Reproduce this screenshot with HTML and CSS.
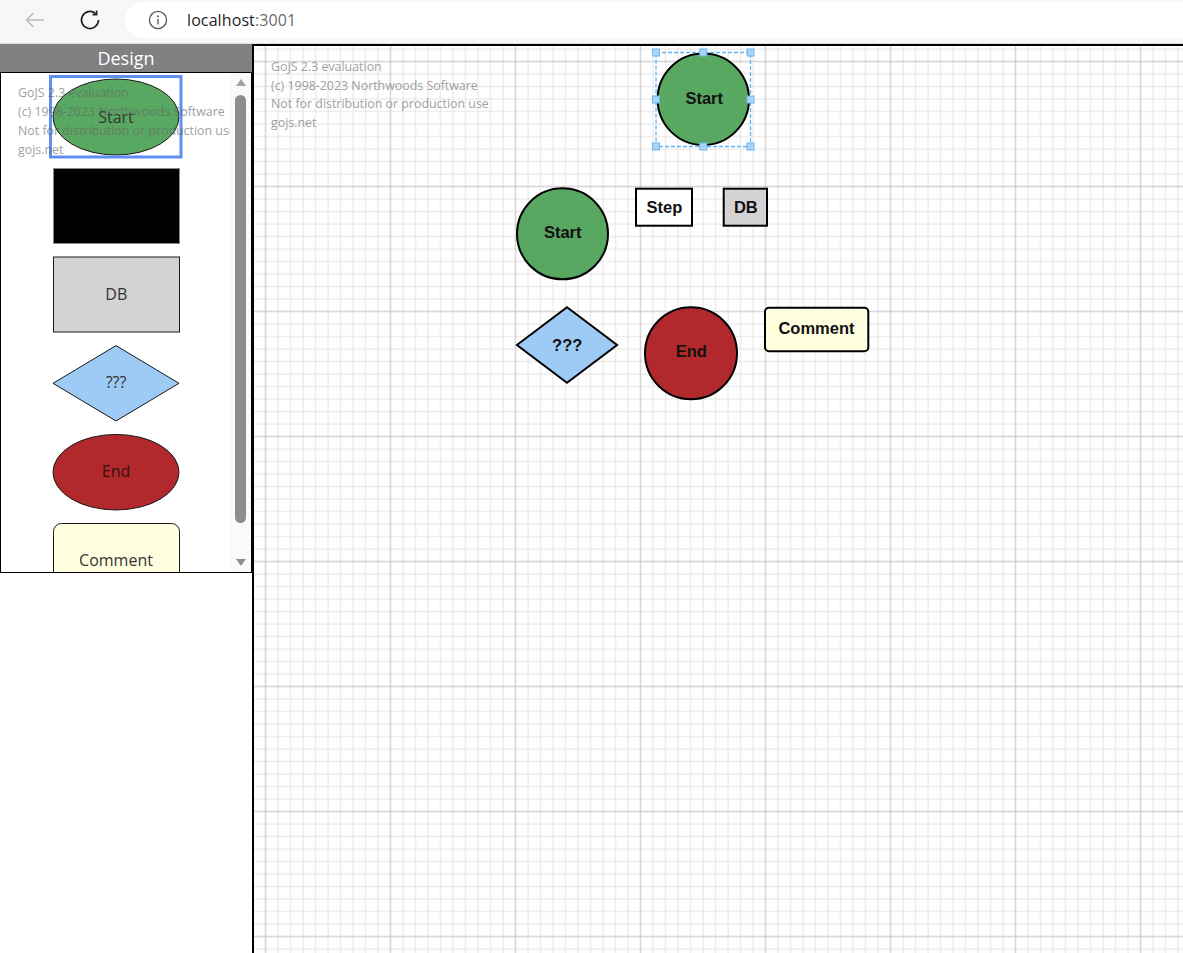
FILE: index.html
```html
<!DOCTYPE html>
<html lang="en">
<head>
<meta charset="utf-8">
<title>localhost:3001</title>
<link rel="stylesheet" href="styles.css">
</head>
<body>
<header class="browser-bar">
  <button class="nav-btn nav-back" aria-label="Back">
    <svg class="nav-icon" viewBox="0 0 22 22"><path class="icon-back" d="M20 11H2.5M9.5 4L2.5 11L9.5 18"/></svg>
  </button>
  <button class="nav-btn nav-reload" aria-label="Reload">
    <svg class="nav-icon" viewBox="0 0 22 22"><path class="icon-reload" d="M19.5 11A8.5 8.5 0 1 1 16.6 4.6"/><path class="icon-reload" d="M17.6 1.5V5.6H13.5"/></svg>
  </button>
  <div class="omnibox">
    <svg class="info-icon" viewBox="0 0 20 20"><circle class="icon-info" cx="10" cy="10" r="8.6"/><circle class="icon-info-dot" cx="10" cy="6.2" r="1"/><path class="icon-info" d="M10 8.7V14.6"/></svg>
    <span class="url"><span class="host">localhost</span><span class="port">:3001</span></span>
  </div>
</header>
<main class="app">
  <aside class="palette-col">
    <div class="palette-title">Design</div>
    <div class="palette">
      <svg class="palette-canvas" viewBox="0 0 229 499">
        <ellipse class="fill-green stroke-thin" cx="115" cy="44" rx="63" ry="38"/>
        <text class="pal-label" x="115" y="49.7">Start</text>
        <rect class="fill-black stroke-soft" x="52.5" y="95.5" width="126" height="75"/>
        <rect class="fill-gray stroke-thin" x="52.5" y="184" width="126" height="75"/>
        <text class="pal-label" x="115.3" y="227">DB</text>
        <polygon class="fill-blue stroke-thin" points="52,310.3 115,272.6 178,310.3 115,348"/>
        <text class="pal-label" x="115" y="315.3">???</text>
        <ellipse class="fill-red stroke-thin" cx="115" cy="399.2" rx="63" ry="37.8"/>
        <text class="pal-label pal-label-dark" x="115" y="404.3">End</text>
        <rect class="fill-yellow stroke-thin" x="52.5" y="450.5" width="126" height="76" rx="8"/>
        <text class="pal-label" x="115" y="493">Comment</text>
        <rect class="pal-selection" x="49.5" y="3.5" width="130.5" height="80.5"/>
        <g class="watermark">
          <text x="17" y="23.7">GoJS 2.3 evaluation</text>
          <text x="17" y="42.7">(c) 1998-2023 Northwoods Software</text>
          <text x="17" y="61.7">Not for distribution or production use</text>
          <text x="17" y="80.7">gojs.net</text>
        </g>
      </svg>
      <div class="scrollbar">
        <span class="scroll-up"></span>
        <span class="scroll-thumb"></span>
        <span class="scroll-down"></span>
      </div>
    </div>
  </aside>
  <section class="diagram">
    <svg class="diagram-canvas" viewBox="0 0 958 918">
      <defs>
        <pattern id="grid" width="125" height="125" patternUnits="userSpaceOnUse" x="-57.25" y="-53.25">
          <path class="grid-minor" d="M6.25 0V125M18.75 0V125M31.25 0V125M43.75 0V125M56.25 0V125M81.25 0V125M93.75 0V125M106.25 0V125M118.75 0V125M0 6.25H125M0 18.75H125M0 31.25H125M0 43.75H125M0 56.25H125M0 81.25H125M0 93.75H125M0 106.25H125M0 118.75H125"/>
          <path class="grid-major" d="M68.75 0V125M0 68.75H125"/>
        </pattern>
      </defs>
      <rect class="grid-bg" x="0" y="0" width="958" height="918"/>
      <g class="watermark">
        <text x="17" y="24.7">GoJS 2.3 evaluation</text>
        <text x="17" y="43.5">(c) 1998-2023 Northwoods Software</text>
        <text x="17" y="62.3">Not for distribution or production use</text>
        <text x="17" y="81.1">gojs.net</text>
      </g>

      <circle class="fill-green stroke-bold" cx="449.3" cy="53.3" r="45.7"/>
      <text class="node-label" x="450.2" y="58.3">Start</text>

      <circle class="fill-green stroke-bold" cx="308.5" cy="187.8" r="45.5"/>
      <text class="node-label" x="308.7" y="192.4">Start</text>

      <rect class="fill-white stroke-bold" x="382" y="142.7" width="56" height="37"/>
      <text class="node-label" x="410.5" y="166.7">Step</text>

      <rect class="fill-gray stroke-bold" x="469.7" y="142.7" width="43.3" height="37"/>
      <text class="node-label" x="491.8" y="166.5">DB</text>

      <polygon class="fill-blue stroke-bold" points="262.9,299 313,261.2 363.1,299 313,336.8"/>
      <text class="node-label" x="313.2" y="304.7">???</text>

      <circle class="fill-red stroke-bold" cx="437" cy="307.3" r="46"/>
      <text class="node-label" x="437.3" y="311.3">End</text>

      <rect class="fill-yellow stroke-bold" x="511" y="261.7" width="103.3" height="43.6" rx="4"/>
      <text class="node-label" x="562.5" y="288.3">Comment</text>

      <rect class="sel-box" x="402" y="6.5" width="94.5" height="94"/>
      <g class="handles">
        <rect x="398.5" y="3" width="7" height="7"/>
        <rect x="445.8" y="3" width="7" height="7"/>
        <rect x="493" y="3" width="7" height="7"/>
        <rect x="398.5" y="50" width="7" height="7"/>
        <rect x="493" y="50" width="7" height="7"/>
        <rect x="398.5" y="97" width="7" height="7"/>
        <rect x="445.8" y="97" width="7" height="7"/>
        <rect x="493" y="97" width="7" height="7"/>
      </g>
    </svg>
  </section>
</main>
</body>
</html>
```
FILE: styles.css
```css
* { box-sizing: border-box; }

html, body {
  margin: 0;
  height: 100%;
  overflow: hidden;
  background: #ffffff;
}

body {
  font-family: "Open Sans", "Noto Sans", sans-serif;
}

/* ---------- browser bar ---------- */
.browser-bar {
  display: flex;
  align-items: flex-start;
  height: 44px;
  padding: 2px 0 0 17px;
  background: #f7f7f7;
  border-bottom: 1px solid #dedede;
}

.nav-btn {
  width: 36px;
  height: 36px;
  display: flex;
  align-items: center;
  justify-content: center;
  padding: 0;
  border: 0;
  background: none;
}

.nav-reload { margin-left: 19px; }

.nav-icon {
  width: 22px;
  height: 22px;
  display: block;
}

.icon-back {
  fill: none;
  stroke: #b9b9b9;
  stroke-width: 1.4;
}

.icon-reload {
  fill: none;
  stroke: #222222;
  stroke-width: 1.7;
}

.omnibox {
  flex: 1;
  height: 36px;
  margin-left: 17px;
  padding-left: 23px;
  display: flex;
  align-items: center;
  background: #ffffff;
  border-radius: 18px 0 0 18px;
}

.info-icon {
  width: 20px;
  height: 20px;
  display: block;
}

.icon-info {
  fill: none;
  stroke: #555555;
  stroke-width: 1.3;
}

.icon-info-dot { fill: #555555; }

.url {
  margin-left: 19px;
  font-size: 16px;
  color: #1f1f1f;
  letter-spacing: 0.1px;
}

.port { color: #6b6b6b; }

/* ---------- app ---------- */
.app {
  display: flex;
  align-items: flex-start;
}

.palette-col {
  width: 252px;
  flex-shrink: 0;
}

.palette-title {
  height: 28px;
  line-height: 28px;
  background: #808080;
  color: #ffffff;
  text-align: center;
  font-size: 18px;
}

.palette {
  display: flex;
  height: 501px;
  border: 1px solid #000000;
  background: #ffffff;
}

.palette-canvas {
  display: block;
  width: 229px;
  height: 499px;
}

.scrollbar {
  width: 21px;
  display: flex;
  flex-direction: column;
  align-items: center;
  background: #fafafa;
}

.scroll-up {
  margin-top: 6px;
  width: 0;
  height: 0;
  border-left: 5px solid transparent;
  border-right: 5px solid transparent;
  border-bottom: 7px solid #a3a3a3;
}

.scroll-thumb {
  margin-top: 9px;
  width: 11px;
  height: 428px;
  border-radius: 6px;
  background: #8d8d8d;
}

.scroll-down {
  margin-top: 36px;
  width: 0;
  height: 0;
  border-left: 5px solid transparent;
  border-right: 5px solid transparent;
  border-top: 7px solid #8f8f8f;
}

.diagram {
  flex-shrink: 0;
  width: 960px;
  height: 920px;
  border-left: 2px solid #000000;
  border-top: 2px solid #000000;
  background: #ffffff;
}

.diagram-canvas {
  display: block;
  width: 958px;
  height: 918px;
}

/* ---------- svg drawing ---------- */
.grid-bg { fill: url(#grid); }

.grid-minor {
  fill: none;
  stroke: #e3e3e3;
  stroke-width: 1;
}

.grid-major {
  fill: none;
  stroke: #bfbfbf;
  stroke-width: 1;
}

.watermark text {
  font-family: "Open Sans", "Noto Sans", sans-serif;
  font-size: 12.4px;
  fill: #666666;
  opacity: 0.62;
}

.fill-green { fill: #59a862; }
.fill-red { fill: #b2292d; }
.fill-blue { fill: #9ecbf5; }
.fill-gray { fill: #d3d3d3; }
.fill-yellow { fill: #ffffe0; }
.fill-white { fill: #ffffff; }
.fill-black { fill: #000000; }

.stroke-thin { stroke: #1a1a1a; stroke-width: 1; }
.stroke-soft { stroke: #8a8a8a; stroke-width: 1; }
.stroke-bold { stroke: #000000; stroke-width: 2; }

.pal-label {
  font-family: "Open Sans", "Noto Sans", sans-serif;
  font-size: 16px;
  fill: #333333;
  text-anchor: middle;
}

.pal-label-dark { fill: #3a1010; }

.pal-selection {
  fill: none;
  stroke: #5f8ff0;
  stroke-width: 3;
}

.node-label {
  font-family: "Liberation Sans", Arial, sans-serif;
  font-weight: bold;
  font-size: 16.5px;
  fill: #111111;
  text-anchor: middle;
}

.sel-box {
  fill: none;
  stroke: #62b6f4;
  stroke-width: 1.3;
  stroke-dasharray: 4 2;
}

.handles rect {
  fill: #a9d4f6;
  stroke: #6db8f2;
  stroke-width: 1;
}
```
